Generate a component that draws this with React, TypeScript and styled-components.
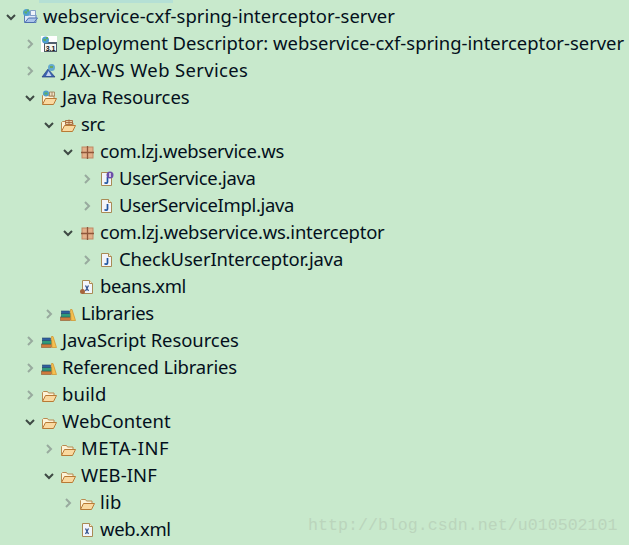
import React from "react";
import styled, { createGlobalStyle } from "styled-components";

const Global = createGlobalStyle`
  html, body { margin: 0; padding: 0; background: #c8e9cc; }
  #root { width: 629px; height: 545px; overflow: hidden; }
`;

const Tree = styled.div`
  position: relative;
  width: 629px;
  height: 545px;
  padding-top: 3px;
  box-sizing: border-box;
  background: #c8e9cc;
  font-family: "Noto Sans", "Open Sans", sans-serif;
  font-size: 18.45px;
  color: #04101c;
  overflow: hidden;
`;

const TopBand = styled.div`
  position: absolute;
  left: 39px;
  top: 0;
  width: 134px;
  height: 3px;
  background: #b5e0d5;
`;

const Row = styled.div<{ $level: number }>`
  display: flex;
  align-items: center;
  height: 27px;
  padding-left: ${(p) => 4 + p.$level * 19}px;
  white-space: nowrap;
`;

const Twist = styled.svg`
  width: 14px;
  height: 14px;
  flex: none;
  margin-right: 4px;
`;

const IconBox = styled.svg`
  width: 16px;
  height: 16px;
  flex: none;
  margin-right: 5px;
`;

const Label = styled.span<{ $track: number }>`
  line-height: 27px;
  padding-bottom: 2px;
  letter-spacing: ${(p) => p.$track}px;
`;

const Watermark = styled.div`
  position: absolute;
  left: 308px;
  top: 516px;
  font-family: "Liberation Mono", monospace;
  font-size: 16.65px;
  line-height: 20px;
  color: #bbd5bc;
`;

type Arrow = "open" | "closed" | "none";
type Kind = "project" | "descriptor" | "ws" | "javares" | "src" | "pkg" | "iface" | "java" | "beans" | "xml" | "libs" | "folder";

const Chevron = ({ a }: { a: Arrow }) => (
  <Twist viewBox="0 0 14 14">
    {a === "open" && <path d="M3 5l4 4 4-4" fill="none" stroke="#3e4a44" strokeWidth="2" />}
    {a === "closed" && <path d="M5 3l4 4-4 4" fill="none" stroke="#98aa9e" strokeWidth="2" />}
  </Twist>
);

const OpenFolder = () => (
  <g>
    <path d="M1.500 14V5.500L2.500 4.500H6.500L7.500 6H13V8" fill="#fdf3d8" stroke="#b98a50" />
    <path d="M1.500 14.500L4.500 8.500H15.500L12.500 14.500Z" fill="#fad9a0" stroke="#b87a35" />
  </g>
);

const Page = ({ children }: { children?: React.ReactNode }) => (
  <g>
    <path d="M3.500 1.500H10.500L13.500 4.500V14.500H3.500Z" fill="#f2f5fb" stroke="#a98a55" />
    <path d="M10.500 1.500V4.500H13.500" fill="#fff3cf" stroke="#a98a55" />
    {children}
  </g>
);

const J = () => <path d="M9.500 6v5c0 1.500-2 1.500-3 .5" fill="none" stroke="#1f55a0" strokeWidth="1.700" />;

const X = () => <path d="M6.500 6.500l3 5.500M9.500 6.500l-3 5.500" stroke="#33538f" strokeWidth="1.300" fill="none" />;

const Books = () => (
  <g>
    <rect x="0.500" y="11" width="10" height="3.500" fill="#cf7a3c" stroke="#8a5a30" strokeWidth=".6" />
    <rect x="1.500" y="7.500" width="9" height="3.500" fill="#2f9a7a" stroke="#1f5f60" strokeWidth=".6" />
    <rect x="1.500" y="5" width="8" height="2.500" fill="#2f5f9f" stroke="#24466f" strokeWidth=".6" />
    <path d="M11 14.500L10.500 3.500h1.500l3.500 11z" fill="#f5c050" stroke="#d09028" strokeWidth=".7" />
  </g>
);

const Icon = ({ k }: { k: Kind }) => (
  <IconBox viewBox="0 0 16 16">
    {k === "project" && (
      <g>
        <path d="M2.500 13.500V6H14V13.500z" fill="#dfe9f7" stroke="#5b7fb8" />
        <path d="M3 13.500L6.500 9H15.500L12 13.500z" fill="#a9c4ea" stroke="#4d6fae" />
        <path d="M8.500 1.500h5v5h-5z" fill="#eef2fa" stroke="#6f8fc0" strokeWidth=".8" />
        <circle cx="4.500" cy="3.500" r="3.500" fill="#4f9fd0" />
        <path d="M2 2.500h3v2H3zM5 .5h2v2H5z" fill="#5fb060" />
      </g>
    )}
    {k === "descriptor" && (
      <g>
        <rect x="0" y="0" width="16" height="16" fill="#ffffff" />
        <rect x="3.500" y="6.500" width="12" height="9" fill="#f7f7f2" stroke="#4e5a66" />
        <rect x="3" y="6" width="13" height="2" fill="#52606e" />
        <text x="9.500" y="14.500" textAnchor="middle" fontFamily="Liberation Sans" fontWeight="700" fontSize="7" fill="#111">3.1</text>
        <circle cx="4.500" cy="4" r="3.500" fill="#4f9fd0" />
        <path d="M2 3h3v2H3zM5 1h2v2H5z" fill="#5fb060" />
      </g>
    )}
    {k === "ws" && (
      <g>
        <path d="M1 14L7 6l7 8z" fill="#3b63b0" stroke="#29407f" strokeWidth=".7" />
        <path d="M5 13L7.500 8l3 5z" fill="#c6d4ee" />
        <circle cx="10.500" cy="4.500" r="3.500" fill="#63a9cf" />
        <path d="M9 3h3v2H9z" fill="#6ca860" />
      </g>
    )}
    {k === "javares" && (
      <g>
        <OpenFolder />
        <path d="M8.500 2h5v4h-5zM11 2v4" fill="#f0e2c4" stroke="#9a7a50" strokeWidth=".8" />
        <circle cx="5" cy="3.500" r="3" fill="#4f9fd0" />
        <path d="M3.500 2.500h3v2h-3z" fill="#5fb060" />
      </g>
    )}
    {k === "src" && (
      <g>
        <OpenFolder />
        <path d="M5.500 3.500h7v4h-7zM9 2.500v5M5.500 5.500h7" fill="#e9cfa2" stroke="#a5673c" strokeWidth=".9" />
      </g>
    )}
    {k === "pkg" && (
      <g>
        <rect x="3" y="3" width="11" height="11" fill="#e3b08a" stroke="#bf8762" />
        <path d="M8.500 2v13M2 8.500h13" stroke="#8f563a" strokeWidth="1.300" />
      </g>
    )}
    {k === "iface" && (
      <g>
        <Page>
          <J />
        </Page>
        <circle cx="12" cy="4" r="3.500" fill="#6b4fa8" />
        <path d="M12 2v4" stroke="#fff" strokeWidth="1.300" />
      </g>
    )}
    {k === "java" && (
      <Page>
        <J />
      </Page>
    )}
    {k === "beans" && (
      <g>
        <Page>
          <X />
        </Page>
        <circle cx="3.500" cy="12.500" r="2.500" fill="#a5633c" />
      </g>
    )}
    {k === "xml" && (
      <Page>
        <X />
      </Page>
    )}
    {k === "libs" && <Books />}
    {k === "folder" && <OpenFolder />}
  </IconBox>
);

const rows: { l: number; a: Arrow; k: Kind; t: string; s: number }[] = [
  { l: 0, a: "open", k: "project", t: "webservice-cxf-spring-interceptor-server", s: 0.02 },
  { l: 1, a: "closed", k: "descriptor", t: "Deployment Descriptor: webservice-cxf-spring-interceptor-server", s: 0 },
  { l: 1, a: "closed", k: "ws", t: "JAX-WS Web Services", s: 0.37 },
  { l: 1, a: "open", k: "javares", t: "Java Resources", s: -0.07 },
  { l: 2, a: "open", k: "src", t: "src", s: -0.3 },
  { l: 3, a: "open", k: "pkg", t: "com.lzj.webservice.ws", s: -0.29 },
  { l: 4, a: "closed", k: "iface", t: "UserService.java", s: -0.31 },
  { l: 4, a: "closed", k: "java", t: "UserServiceImpl.java", s: -0.3 },
  { l: 3, a: "open", k: "pkg", t: "com.lzj.webservice.ws.interceptor", s: -0.21 },
  { l: 4, a: "closed", k: "java", t: "CheckUserInterceptor.java", s: -0.12 },
  { l: 3, a: "none", k: "beans", t: "beans.xml", s: -0.33 },
  { l: 2, a: "closed", k: "libs", t: "Libraries", s: -0.22 },
  { l: 1, a: "closed", k: "libs", t: "JavaScript Resources", s: -0.05 },
  { l: 1, a: "closed", k: "libs", t: "Referenced Libraries", s: -0.15 },
  { l: 1, a: "closed", k: "folder", t: "build", s: 0.2 },
  { l: 1, a: "open", k: "folder", t: "WebContent", s: 0.1 },
  { l: 2, a: "closed", k: "folder", t: "META-INF", s: 0.6 },
  { l: 2, a: "open", k: "folder", t: "WEB-INF", s: 0.1 },
  { l: 3, a: "closed", k: "folder", t: "lib", s: 0.2 },
  { l: 3, a: "none", k: "xml", t: "web.xml", s: -0.3 },
];

export default function App() {
  return (
    <>
      <Global />
      <Tree>
        <TopBand />
        {rows.map((r, i) => (
          <Row key={i} $level={r.l}>
            <Chevron a={r.a} />
            <Icon k={r.k} />
            <Label $track={r.s}>{r.t}</Label>
          </Row>
        ))}
        <Watermark>http://blog.csdn.net/u010502101</Watermark>
      </Tree>
    </>
  );
}
